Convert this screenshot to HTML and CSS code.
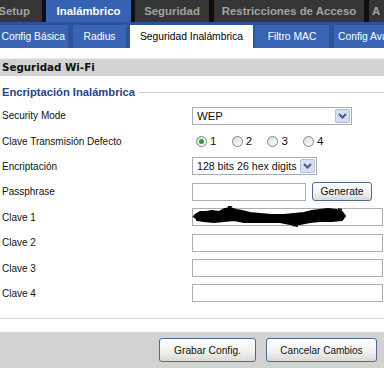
FILE: index.html
```html
<!DOCTYPE html>
<html lang="es">
<head>
    <meta charset="UTF-8">
    <title>Seguridad Inalámbrica</title>
    <link rel="stylesheet" href="styles.css">
</head>
<body>

<div class="topnav">
    <span class="tab tab-setup">Setup</span>
    <span class="tab tab-wifi active">Inalámbrico</span>
    <span class="tab tab-seg">Seguridad</span>
    <span class="tab tab-restr">Restricciones de Acceso</span>
    <span class="tab tab-a">A</span>
</div>

<div class="subnav">
    <span class="subtab st-basic">Config Básica</span>
    <span class="subtab st-radius">Radius</span>
    <span class="subtab st-sec active">Seguridad Inalámbrica</span>
    <span class="subtab st-mac">Filtro MAC</span>
    <span class="subtab st-adv">Config Ava</span>
</div>

<div class="content">
    <div class="section-title">Seguridad Wi-Fi</div>

    <div class="legend"><span>Encriptación Inalámbrica</span><span class="legend-line"></span></div>

    <div class="form">
        <div class="label">Security Mode</div>
        <div class="field">
            <div class="select select-mode"><span class="select-value">WEP</span><span class="select-arrow"><svg width="9" height="6" viewBox="0 0 9 6"><polyline points="1,1 4.5,4.5 8,1" fill="none" stroke="#4a5a7a" stroke-width="2"/></svg></span></div>
        </div>

        <div class="label">Clave Transmisión Defecto</div>
        <div class="field radios">
            <span class="radio-item"><span class="radio checked"></span>1</span>
            <span class="radio-item"><span class="radio"></span>2</span>
            <span class="radio-item"><span class="radio"></span>3</span>
            <span class="radio-item"><span class="radio"></span>4</span>
        </div>

        <div class="label">Encriptación</div>
        <div class="field">
            <div class="select select-enc"><span class="select-value">128 bits 26 hex digits</span><span class="select-arrow"><svg width="9" height="6" viewBox="0 0 9 6"><polyline points="1,1 4.5,4.5 8,1" fill="none" stroke="#4a5a7a" stroke-width="2"/></svg></span></div>
        </div>

        <div class="label">Passphrase</div>
        <div class="field">
            <div class="input input-pass"></div>
            <button class="btn btn-gen">Generate</button>
        </div>

        <div class="label">Clave 1</div>
        <div class="field">
            <div class="input input-key">
                <!-- clave tachada a mano -->
                <svg class="scribble" width="160" height="22" viewBox="0 0 160 22">
                    <path d="M3,9 L8,6 L14,6 L20,5 L27,6 L33,3 L38,2 L44,4 L50,5 L58,7 L68,8 L80,9 L92,9 L102,8 L112,7 L120,5 L128,4 L136,3 L144,4 L150,6 L153,10 L150,14 L140,15 L128,15 L118,16 L108,18 L98,18 L88,16 L76,16 L64,16 L52,16 L42,14 L32,15 L22,16 L12,15 L5,14 Z" fill="#000" stroke="#000" stroke-width="2" stroke-linejoin="round"/>
                    <path d="M1,10 L4,12 M36,1 L40,0 M146,3 L150,4 M100,19 L106,20" stroke="#111" stroke-width="2"/>
                </svg>
            </div>
        </div>

        <div class="label">Clave 2</div>
        <div class="field"><div class="input input-key"></div></div>

        <div class="label">Clave 3</div>
        <div class="field"><div class="input input-key"></div></div>

        <div class="label">Clave 4</div>
        <div class="field"><div class="input input-key"></div></div>
    </div>

    <div class="separator"></div>
</div>

<div class="footer">
    <button class="btn btn-save">Grabar Config.</button>
    <button class="btn btn-cancel">Cancelar Cambios</button>
</div>

</body>
</html>
```

FILE: styles.css
```css
body {
    margin: 0;
    padding: 0;
    width: 384px;
    height: 368px;
    overflow: hidden;
    font-family: "Liberation Sans", Arial, sans-serif;
    background-color: #fff;
    color: #111;
}

/* barra superior */
.topnav {
    display: flex;
    height: 22px;
    background-color: #0e0e0e;
    gap: 4px;
    overflow: hidden;
}
.tab {
    flex: none;
    display: flex;
    align-items: center;
    justify-content: center;
    background-color: #353535;
    color: #a3a3a3;
    font-weight: bold;
    font-size: 11.4px;
    white-space: nowrap;
    overflow: hidden;
}
.tab.active {
    background-color: #3762b3;
    color: #fff;
}
.tab-setup { width: 42px; justify-content: flex-end; padding-right: 12px; box-sizing: border-box; }
.tab-wifi { width: 85px; }
.tab-seg { width: 74px; }
.tab-restr { width: 150px; margin-left: 1px; }
.tab-a { width: 40px; margin-left: 1px; justify-content: flex-start; padding-left: 3px; }

/* pestañas secundarias */
.subnav {
    display: flex;
    height: 26px;
    background-color: #2d5399;
    padding-top: 3px;
    box-sizing: border-box;
    gap: 4px;
    overflow: hidden;
}
.subtab {
    flex: none;
    display: flex;
    align-items: center;
    justify-content: center;
    background-color: #3a64b4;
    color: #fff;
    font-size: 10.3px;
    white-space: nowrap;
    overflow: hidden;
}
.subtab.active {
    background-color: #fff;
    color: #000;
}
.st-basic { width: 68px; justify-content: flex-end; padding-right: 3px; box-sizing: border-box; }
.st-radius { width: 53px; margin-left: 1px; }
.st-sec { width: 123px; }
.st-mac { width: 74px; margin-left: -2px; }
.st-adv { width: 54px; margin-left: 1px; justify-content: flex-start; padding-left: 4px; box-sizing: border-box; }

/* contenido */
.content {
    padding-top: 10px;
}
.section-title {
    height: 17px;
    line-height: 17px;
    background-color: #d3d3d3;
    border-top: 1px solid #ececec;
    padding-left: 2px;
    font-family: "DejaVu Sans", Verdana, sans-serif;
    font-weight: bold;
    font-size: 10.3px;
    color: #111;
}
.legend {
    display: flex;
    align-items: center;
    height: 22px;
    margin-top: 5px;
    padding-left: 2px;
    color: #2a418c;
    font-weight: bold;
    font-size: 11.2px;
}
.legend-line {
    flex: 1;
    margin-left: 4px;
    border-top: 1px solid #cdcdcd;
}

.form {
    display: grid;
    grid-template-columns: 192px 1fr;
    grid-auto-rows: 25.4px;
}
.label {
    display: flex;
    align-items: center;
    padding-left: 2px;
    font-size: 10px;
    color: #111;
}
.field {
    display: flex;
    align-items: center;
}

.select {
    display: flex;
    align-items: center;
    justify-content: space-between;
    height: 18px;
    box-sizing: border-box;
    border: 1px solid #a5acb2;
    background-color: #fff;
    padding: 0 1px 0 4px;
    font-size: 11.4px;
    white-space: nowrap;
}
.select-mode { width: 160px; }
.select-enc { width: 125px; font-size: 10.6px; }
.select-arrow {
    flex: none;
    display: flex;
    align-items: center;
    justify-content: center;
    width: 15px;
    height: 14px;
    box-sizing: border-box;
    background-color: #d6dff2;
    border: 1px solid #b4c0da;
    border-radius: 2px;
}

.radios {
    padding-left: 4px;
    font-size: 11.5px;
}
.radio-item {
    display: flex;
    align-items: center;
    width: 35.7px;
}
.radio {
    display: inline-flex;
    align-items: center;
    justify-content: center;
    width: 11px;
    height: 11px;
    box-sizing: border-box;
    border: 1px solid #6e89ad;
    border-radius: 50%;
    background: linear-gradient(135deg, #dcdcd6, #fff);
    margin-right: 3px;
}
.radio.checked::after {
    content: "";
    width: 5px;
    height: 5px;
    border-radius: 50%;
    background-color: #2aa22a;
}

.input {
    height: 18px;
    box-sizing: border-box;
    border: 1px solid #adadad;
    background-color: #fff;
}
.input-pass { width: 114px; }
.input-key { width: 191px; position: relative; }
.scribble {
    position: absolute;
    left: -1px;
    top: -3px;
}

.btn {
    font-family: "Liberation Sans", Arial, sans-serif;
    color: #111;
    border: 1px solid #4f6a93;
    border-radius: 3px;
    background: linear-gradient(#ffffff, #f0f0ee 60%, #d8d8d4);
    padding: 0;
    box-sizing: border-box;
}
.btn-gen {
    width: 60px;
    height: 19px;
    margin-left: 6px;
    font-size: 10.3px;
}

.separator {
    margin-top: 12px;
    border-top: 1px solid #d6d6d6;
}

.footer {
    display: flex;
    justify-content: flex-end;
    align-items: center;
    gap: 10px;
    margin-top: 13px;
    height: 36px;
    padding-right: 7px;
    background-color: #d2d2d2;
}
.btn-save {
    width: 97px;
    height: 24px;
    font-size: 10.2px;
}
.btn-cancel {
    width: 111px;
    height: 24px;
    font-size: 10px;
}
```
